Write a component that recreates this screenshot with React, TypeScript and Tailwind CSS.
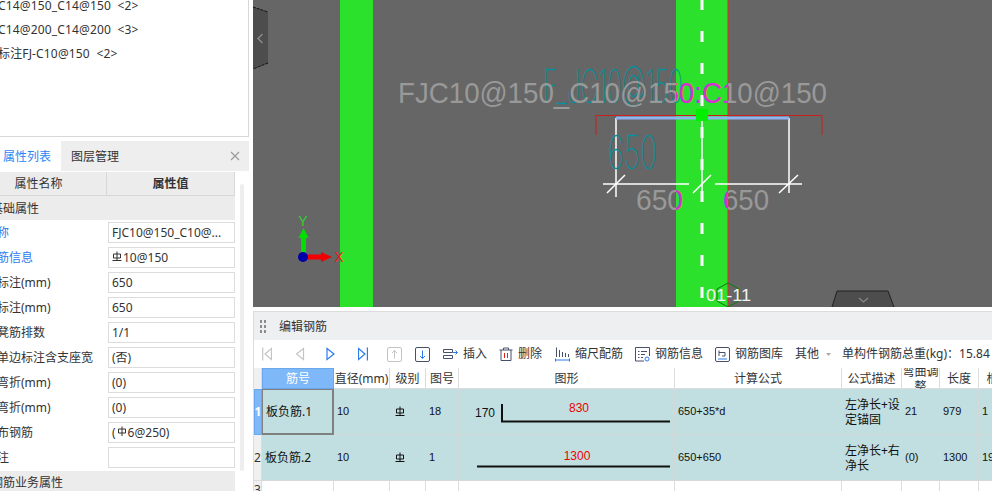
import type { ReactNode } from 'react';

const ui = 'font-["Noto_Sans","Noto_Sans_CJK_SC",sans-serif]';
const cad = '"Liberation Sans", sans-serif';
const thin = 'Inter, "Liberation Sans", sans-serif';

function SteelC() {
  return (
    <svg width="10" height="11" viewBox="0 0 10 11" className="inline-block shrink-0" fill="none" stroke="currentColor" strokeWidth="1">
      <path d="M5 0.5v9M1.5 3h7v4h-7zM0.5 9.5h9" />
    </svg>
  );
}

function SteelA() {
  return (
    <svg width="10" height="11" viewBox="0 0 10 11" className="inline-block shrink-0" fill="none" stroke="currentColor" strokeWidth="1">
      <path d="M5 0.5v9.5M1.5 3h7v4h-7z" />
    </svg>
  );
}

const props: { label: ReactNode; value: ReactNode; blue?: boolean; shift?: boolean }[] = [
  { label: '名称', value: 'FJC10@150_C10@...', blue: true },
  { label: '钢筋信息', value: <><span className="mr-[1px] -mt-1"><SteelC /></span>10@150</>, blue: true },
  { label: '左标注(mm)', value: '650' },
  { label: '右标注(mm)', value: '650' },
  { label: '马凳筋排数', value: '1/1' },
  { label: '是否单边标注含支座宽', value: '(否)', shift: true },
  { label: '左弯折(mm)', value: '(0)' },
  { label: '右弯折(mm)', value: '(0)' },
  { label: '分布钢筋', value: <>(<span className="mx-[1px] -mt-1"><SteelA /></span>6@250)</> },
  { label: '备注', value: '' },
];

function LeftPanel() {
  return (
    <aside className="w-[253px] shrink-0 h-full overflow-hidden bg-white">
      <div className="w-[249px] h-[143px] border-r border-b border-[#d8d8d8] -mt-[6px] text-[12px] text-[#333] tracking-[0.15px]">
        {['C14@150_C14@150  <2>', 'C14@200_C14@200  <3>', '标注FJ-C10@150  <2>'].map((t) => (
          <div key={t} className="h-[24px] leading-[24px] -ml-[2px] whitespace-pre">{t}</div>
        ))}
      </div>
      <div className="w-[249px] mt-[4px] h-[30px] bg-[#eeeeef] flex items-center text-[12px] text-[#333]">
        <div className="w-[61px] h-full bg-white flex items-center pl-[3px] pt-[1px] text-[#2b86f5]">属性列表</div>
        <div className="ml-[10px] pt-[1px]">图层管理</div>
        <svg className="ml-auto mr-[9px] text-[#999]" width="10" height="10" viewBox="0 0 10 10" fill="none" stroke="currentColor" strokeWidth="1.1">
          <path d="M1 1l8 8M9 1l-8 8" />
        </svg>
      </div>
      <div className="flex w-[249px]">
        <div className="w-[235px] overflow-hidden shrink-0 text-[12px] text-[#333]">
          <div className="-ml-[29px] w-[264px]">
            <div className="flex h-[24px] mt-[1px] bg-[#ececec] border-b border-[#d8d8d8]">
              <div className="w-[136px] flex items-center justify-center pt-[1px] border-r border-[#d8d8d8]">属性名称</div>
              <div className="flex-1 flex items-center justify-center pt-[1px] font-bold border-r border-[#d8d8d8]">属性值</div>
            </div>
            <div className="h-[24px] bg-[#ececec] flex items-center pl-[20px] pt-[1px]">基础属性</div>
            {props.map((p, i) => (
              <div key={i} className="flex h-[25px] items-center">
                <div className={`w-[137px] shrink-0 whitespace-nowrap pt-[1px] ${p.shift ? 'pl-[2px]' : 'pl-[14px]'} ${p.blue ? 'text-[#2b7bf0]' : ''}`}>{p.label}</div>
                <div className="w-[127px] h-[21px] border border-[#dcdcdc] flex items-center pl-[3px] pt-[1px] whitespace-nowrap overflow-hidden">{p.value}</div>
              </div>
            ))}
            <div className="h-[23px] mt-[1px] bg-[#ececec] flex items-center pl-[20px] pt-[1px]">钢筋业务属性</div>
          </div>
        </div>
        <div className="ml-[5px] mt-[13px] w-[4px] h-[287px] rounded-full bg-[#eeeeee]" />
      </div>
    </aside>
  );
}

function Canvas() {
  const big = 'FJC10@150_C10@150:C10@150';
  const bigText = (fill: string, clip?: string) => (
    <text x="398" y="103" fontSize="30" fill={fill} clipPath={clip} textLength="429" lengthAdjust="spacingAndGlyphs" fontFamily={cad}>{big}</text>
  );
  const dims = (fill: string, clip?: string) => (
    <g fill={fill} clipPath={clip} fontSize="29" fontFamily={cad}>
      <text x="636" y="210" textLength="47" lengthAdjust="spacingAndGlyphs">650</text>
      <text x="723" y="210" textLength="46" lengthAdjust="spacingAndGlyphs">650</text>
    </g>
  );
  return (
    <svg className="block w-[739px] h-[307px] shrink-0" viewBox="253 0 739 307">
      <defs>
        <clipPath id="col"><rect x="676" y="0" width="52" height="307" /></clipPath>
      </defs>
      <rect x="253" y="0" width="739" height="307" fill="#666666" />
      <rect x="340" y="0" width="33" height="307" fill="#2be12c" />
      <rect x="676" y="0" width="52" height="307" fill="#2be12c" />
      <line x1="728" y1="0" x2="728" y2="307" stroke="#dd2a18" strokeWidth="1" />
      <line x1="702" y1="-1" x2="702" y2="307" stroke="#fff" strokeWidth="3" strokeDasharray="11 21" />
      <line x1="702" y1="118" x2="702" y2="192" stroke="#fff" strokeWidth="1.5" />

      <text x="543" y="103" fontSize="46" fontWeight="100" fill="#00919e" stroke="#00919e" strokeWidth="0.3" textLength="140" lengthAdjust="spacingAndGlyphs" fontFamily={thin}>F_JC10@150</text>
      {bigText('#999999')}
      {bigText('#d62fd0', 'url(#col)')}

      <path d="M596 135V115.500H822V135" fill="none" stroke="#c9201c" strokeWidth="1" />
      <path d="M616 118V197M789 118V193" stroke="#fff" strokeWidth="1.500" />
      <line x1="616" y1="118" x2="789" y2="118" stroke="#8fb4f0" strokeWidth="3" />
      <rect x="696" y="109" width="12" height="12" fill="#00ee00" />
      <text x="608" y="169" fontSize="46" fontWeight="100" fill="#00919e" stroke="#00919e" strokeWidth="0.3" textLength="49" lengthAdjust="spacingAndGlyphs" fontFamily={thin}>650</text>
      <path d="M603 184H689M715 184H802M607 193L625 175M693 193L711 175M779 193L798 175" stroke="#fff" strokeWidth="1.500" fill="none" />
      {dims('#999999')}
      {dims('#d62fd0', 'url(#col)')}

      <path d="M728 283l11 6v12l-11 6l-11-6v-12z" fill="none" stroke="#0d7a0d" strokeWidth="1" />
      <text x="706" y="301" fontSize="17" fill="#f2f2f2" fontFamily={cad} textLength="45" lengthAdjust="spacingAndGlyphs">01-11</text>

      <text x="303" y="226" fontSize="14" fill="#2fd22f" textAnchor="middle" fontFamily={cad}>Y</text>
      <rect x="301" y="238" width="5" height="19" fill="#00e000" />
      <path d="M303.500 228l5 10h-10z" fill="#00e000" />
      <rect x="303" y="254.500" width="18" height="5" fill="#f00000" />
      <path d="M321 252l11 5-11 5z" fill="#f00000" />
      <circle cx="303" cy="257" r="5" fill="#0000a8" />
      <text x="339" y="262" fontSize="14" fill="#ee1c1c" textAnchor="middle" fontFamily={cad}>X</text>

      <path d="M253 7L268 12V63L253 69z" fill="#4d4d4d" />
      <path d="M253 7L268 12M268 63L253 69" stroke="#111" strokeWidth="1" strokeDasharray="3 1" fill="none" />
      <path d="M262.500 34L258 38.500L262.500 43" fill="none" stroke="#8a8a8a" strokeWidth="1.500" />

      <path d="M837 291H888L894 307H832z" fill="#4d4d4d" />
      <path d="M832 307L837 291H888L894 307" stroke="#222" strokeWidth="1" fill="none" />
      <path d="M859 298L863.500 302L868 298" fill="none" stroke="#8a8a8a" strokeWidth="1.200" />
    </svg>
  );
}

function NavIcon({ d, color }: { d: string; color: string }) {
  return (
    <svg width="10" height="14" viewBox="0 0 10 14" fill="none" stroke={color} strokeWidth="1.200">
      <path d={d} />
    </svg>
  );
}

function BoxArrow({ up }: { up?: boolean }) {
  return (
    <svg width="15" height="15" viewBox="0 0 15 15" fill="none">
      <rect x="0.500" y="0.500" width="14" height="14" rx="1.500" stroke={up ? '#c4c4c4' : '#46506a'} />
      <path d={up ? 'M7.500 11.500V3.500M5 6L7.500 3.500L10 6' : 'M7.500 3.500V11.500M5 9L7.500 11.500L10 9'} stroke={up ? '#c4c4c4' : '#2b7bf0'} />
    </svg>
  );
}

function Tool({ icon, label, ml }: { icon: ReactNode; label: string; ml: string }) {
  return (
    <div className={`flex items-center gap-[5px] whitespace-nowrap ${ml}`}>
      {icon}
      <span>{label}</span>
    </div>
  );
}

const hd = 'h-full flex items-center justify-center pt-[1px] border-r border-[#dcdcdc] overflow-hidden';
const cell = 'h-full flex items-center border-r border-b border-[#d5d8d8] overflow-hidden whitespace-nowrap';
const mono = 'font-["Liberation_Sans",sans-serif] text-[11px]';
const cols = 'grid grid-cols-[8px_72px_56px_36px_33px_216px_167px_60px_38px_39px_40px]';

function Figure1() {
  return (
    <svg width="215" height="45" viewBox="0 0 215 45" className="block">
      <text x="16" y="28" fontSize="12" fontFamily={cad} fill="#111" textLength="20">170</text>
      <path d="M43 15V32.500H211" fill="none" stroke="#111" strokeWidth="2" />
      <text x="120" y="23" fontSize="12" textAnchor="middle" fontFamily={cad} fill="#f00000">830</text>
    </svg>
  );
}

function Figure2() {
  return (
    <svg width="215" height="45" viewBox="0 0 215 45" className="block">
      <path d="M18 31.500H211" fill="none" stroke="#111" strokeWidth="2" />
      <text x="118" y="25" fontSize="12" textAnchor="middle" fontFamily={cad} fill="#f00000">1300</text>
    </svg>
  );
}

function RebarPanel() {
  return (
    <section className="mt-[4px] flex-1 border-t border-l border-[#dcdcdc] overflow-hidden text-[12px] text-[#333]">
      <div className="h-[28px] bg-[#eeeff1] flex items-center pl-[6px]">
        <div className="grid grid-cols-2 gap-x-[2px] gap-y-[2px]">
          {[0, 1, 2, 3, 4, 5].map((i) => <span key={i} className="w-[2px] h-[3px] bg-[#8c8c8c]" />)}
        </div>
        <span className="ml-[13px] mt-[1px]">编辑钢筋</span>
      </div>
      <div className="h-[28px] bg-white flex items-center pl-[8px] whitespace-nowrap">
        <NavIcon d="M0.700 0.500V13.500M9.500 1.500L3 7L9.500 12.500z" color="#c4c4c4" />
        <div className="ml-[23px]"><NavIcon d="M8.500 1.500L1.500 7L8.500 12.500z" color="#c4c4c4" /></div>
        <div className="ml-[21px]"><NavIcon d="M1 1.500L8 7L1 12.500z" color="#2b7bf0" /></div>
        <div className="ml-[22px]"><NavIcon d="M0.500 1.500L7 7L0.500 12.500zM9.400 0.500V13.500" color="#2b7bf0" /></div>
        <div className="ml-[19px]"><BoxArrow up /></div>
        <div className="ml-[13px]"><BoxArrow /></div>
        <Tool ml="ml-[13px]" label="插入" icon={
          <svg width="15" height="14" viewBox="0 0 15 14" fill="none" stroke="#46506a">
            <path d="M0.500 2.500H9.500V5.500H0.500zM0.500 8.500H9.500V11.500H0.500z" />
            <path d="M10 5.500H14.500M12.500 3.500L14.500 5.500L12.500 7.500" stroke="#2b7bf0" />
          </svg>
        } />
        <Tool ml="ml-[12px]" label="删除" icon={
          <svg width="14" height="15" viewBox="0 0 14 15" fill="none" stroke="#46506a">
            <path d="M0.500 3H13.500M2 3V13.500H12V3M4.500 3V1H9.500V3" />
            <path d="M5.500 6V11M8.500 6V11" stroke="#e02020" />
          </svg>
        } />
        <Tool ml="ml-[13px]" label="缩尺配筋" icon={
          <svg width="15" height="15" viewBox="0 0 15 15" fill="none" stroke="#46506a">
            <path d="M1.500 0.500V10M4.500 3V10M7.500 5V10M10.500 6V10M13.500 7V10" />
            <path d="M0.500 13H14.500M0.500 11.500V14.500M14.500 11.500V14.500" stroke="#2b7bf0" />
          </svg>
        } />
        <Tool ml="ml-[12px]" label="钢筋信息" icon={
          <svg width="15" height="15" viewBox="0 0 15 15" fill="none" stroke="#46506a">
            <path d="M9 14H0.500V0.500H14.500V9" />
            <path d="M3 4.500H4.500M6 4.500H12M3 7.500H4.500M6 7.500H10M3 10.500H4.500M6 10.500H8" />
            <circle cx="12" cy="12" r="2" stroke="#2b7bf0" />
          </svg>
        } />
        <Tool ml="ml-[12px]" label="钢筋图库" icon={
          <svg width="15" height="15" viewBox="0 0 15 15" fill="none" stroke="#46506a">
            <rect x="0.500" y="0.500" width="14" height="14" rx="1.500" />
            <path d="M4 3.500V9M4 5.500H10V9H7" />
            <path d="M3 12H12" stroke="#2b7bf0" />
          </svg>
        } />
        <span className="ml-[12px]">其他</span>
        <svg className="ml-[7px]" width="5" height="3" viewBox="0 0 5 3"><path d="M0 0H5L2.500 3z" fill="#a8a8a8" /></svg>
        <span className="ml-[11px]">单构件钢筋总重(kg)：15.84</span>
      </div>
      <div className={`${cols} h-[21px] w-[765px] border-b border-[#dcdcdc]`}>
        <div className="bg-[#f0f0f0] border-r border-[#dcdcdc]" />
        <div className="h-full flex items-center justify-center pt-[1px] bg-[#7eb8f8] text-white border border-[#6aa8ee]">筋号</div>
        <div className={`${hd} whitespace-nowrap`}>直径(mm)</div>
        <div className={hd}>级别</div>
        <div className={hd}>图号</div>
        <div className={hd}>图形</div>
        <div className={hd}>计算公式</div>
        <div className={hd}>公式描述</div>
        <div className={`${hd} leading-[15px] text-center`}>弯曲调<br />整</div>
        <div className={hd}>长度</div>
        <div className={hd}>根数</div>
      </div>
      <div className={`${cols} h-[46px] w-[765px]`}>
        <div className="bg-[#7eb8f8] text-white font-bold flex items-center justify-center border border-[#6aa8ee]">1</div>
        <div className="h-full flex items-center pl-[3px] bg-[#c1dfe1] text-[#111] border-r-2 border-b-2 border-t border-l border-[#808080] whitespace-nowrap">板负筋.1</div>
        <div className={`${cell} bg-[#c1dfe1] pl-[3px] text-[#111] ${mono}`}>10</div>
        <div className={`${cell} bg-[#c1dfe1] pl-[5px] text-[#111]`}><SteelC /></div>
        <div className={`${cell} bg-[#c1dfe1] pl-[3px] text-[#111] ${mono}`}>18</div>
        <div className={`${cell} bg-[#c1dfe1]`}><Figure1 /></div>
        <div className={`${cell} bg-[#c1dfe1] pl-[3px] text-[#111] ${mono}`}>650+35*d</div>
        <div className={`${cell} bg-[#c1dfe1] pl-[3px] text-[#111] leading-[15px]`}><span>左净长+设<br />定锚固</span></div>
        <div className={`${cell} bg-[#c1dfe1] pl-[3px] text-[#111] ${mono}`}>21</div>
        <div className={`${cell} bg-[#c1dfe1] pl-[3px] text-[#111] ${mono}`}>979</div>
        <div className={`${cell} bg-[#c1dfe1] pl-[3px] text-[#111] ${mono}`}>1</div>
      </div>
      <div className={`${cols} h-[46px] w-[765px]`}>
        <div className="bg-[#f0f0f0] text-[#333] flex items-center justify-center border-r border-b border-[#dcdcdc]">2</div>
        <div className={`${cell} bg-[#c1dfe1] pl-[3px] text-[#111]`}>板负筋.2</div>
        <div className={`${cell} bg-[#c1dfe1] pl-[3px] text-[#111] ${mono}`}>10</div>
        <div className={`${cell} bg-[#c1dfe1] pl-[5px] text-[#111]`}><SteelC /></div>
        <div className={`${cell} bg-[#c1dfe1] pl-[3px] text-[#111] ${mono}`}>1</div>
        <div className={`${cell} bg-[#c1dfe1]`}><Figure2 /></div>
        <div className={`${cell} bg-[#c1dfe1] pl-[3px] text-[#111] ${mono}`}>650+650</div>
        <div className={`${cell} bg-[#c1dfe1] pl-[3px] text-[#111] leading-[15px]`}><span>左净长+右<br />净长</span></div>
        <div className={`${cell} bg-[#c1dfe1] pl-[3px] text-[#111] ${mono}`}>(0)</div>
        <div className={`${cell} bg-[#c1dfe1] pl-[3px] text-[#111] ${mono}`}>1300</div>
        <div className={`${cell} bg-[#c1dfe1] pl-[3px] text-[#111] ${mono}`}>19</div>
      </div>
      <div className={`${cols} h-[46px] w-[765px]`}>
        <div className="bg-[#f0f0f0] text-[#333] flex items-start justify-center border-r border-[#dcdcdc]">3</div>
        {[0, 1, 2, 3, 4, 5, 6, 7, 8, 9].map((i) => <div key={i} className="border-r border-[#dcdcdc]" />)}
      </div>
    </section>
  );
}

export default function App() {
  return (
    <div className={`w-[992px] h-[491px] flex overflow-hidden bg-white ${ui}`}>
      <LeftPanel />
      <main className="w-[739px] flex flex-col h-full overflow-hidden">
        <Canvas />
        <RebarPanel />
      </main>
    </div>
  );
}
